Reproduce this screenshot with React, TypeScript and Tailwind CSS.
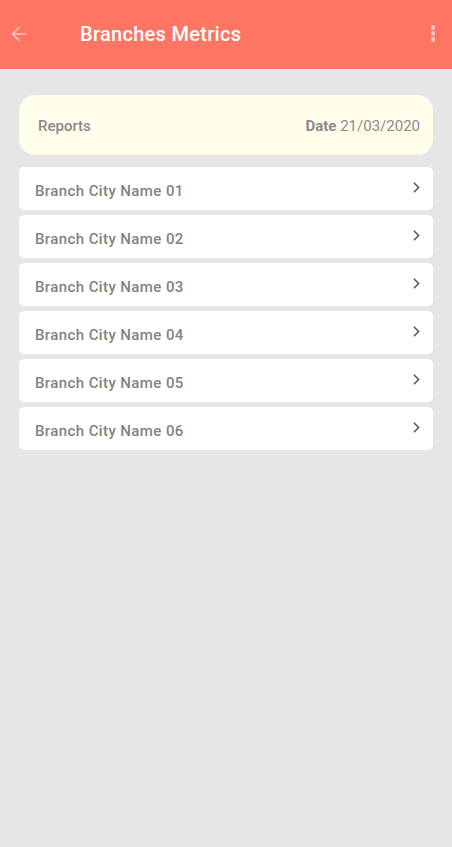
import { ArrowLeft, ChevronRight } from "lucide-react";

const branches = ["01", "02", "03", "04", "05", "06"];

export default function App() {
  return (
    <div className="min-h-[847px] w-full bg-[#e6e6e6] font-['Roboto',sans-serif]">
      {/* App bar */}
      <header className="h-[69px] bg-[#ff7563] flex items-center pl-[8px] pr-[17px] pb-[2px]">
        <ArrowLeft className="w-[22px] h-[22px] text-white/55" strokeWidth={1.75} />
        <h1 className="ml-[50px] text-[20px] font-medium text-white tracking-[0.3px]">Branches Metrics</h1>
        <div className="ml-auto flex flex-col gap-[1.5px]">
          <span className="w-[4.5px] h-[4.5px] rounded-full bg-white/60" />
          <span className="w-[4.5px] h-[4.5px] rounded-full bg-white/60" />
          <span className="w-[4.5px] h-[4.5px] rounded-full bg-white/60" />
        </div>
      </header>

      <main className="px-[19px] pt-[26px] flex flex-col">
        {/* Reports card */}
        <div className="h-[60px] rounded-[16px] bg-[#fffeeb] flex items-center justify-between pl-[19px] pr-[13px] pt-[3px]">
          <span className="text-[15px] text-[#8a8a8a] font-medium">Reports</span>
          <span className="text-[15px] text-[#8a8a8a]">
            <span className="font-bold">Date</span> 21/03/2020
          </span>
        </div>

        {/* Branch list */}
        <div className="mt-[12px] flex flex-col gap-[5px]">
          {branches.map((n) => (
            <div
              key={n}
              className="h-[43px] rounded-[5px] bg-white flex items-center justify-between pl-[16px] pr-[8px]"
            >
              <span className="text-[15px] font-medium text-[#828282] tracking-[0.4px] mt-[5px]">
                Branch City Name {n}
              </span>
              <ChevronRight className="w-[17px] h-[17px] text-[#555555] mb-[2px]" strokeWidth={2.25} />
            </div>
          ))}
        </div>
      </main>
    </div>
  );
}
